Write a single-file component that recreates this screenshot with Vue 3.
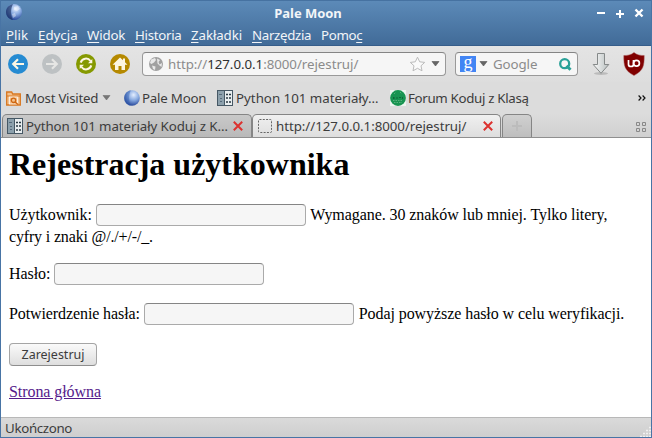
<script setup>
const menus = [
  { key: 'P', rest: 'lik', cls: 'm1' },
  { key: 'E', rest: 'dycja', cls: 'm2' },
  { key: 'W', rest: 'idok', cls: 'm3' },
  { key: 'H', rest: 'istoria', cls: 'm4' },
  { key: 'Z', rest: 'akładki', cls: 'm5' },
  { key: 'N', rest: 'arzędzia', cls: 'm6' },
  { pre: 'Pomo', key: 'c', rest: '', cls: 'm7' }
]
</script>

<template>
  <div class="window">
    <header class="chrome">
      <div class="titlebar">
        <svg class="app" width="16" height="16" viewBox="0 0 16 16">
          <defs>
            <radialGradient id="moon" cx=".6" cy=".3" r=".7">
              <stop offset="0" stop-color="#e4eeff" /><stop offset=".5" stop-color="#86a8df" /><stop offset="1" stop-color="#27489a" />
            </radialGradient>
          </defs>
          <circle cx="8" cy="8" r="8" fill="url(#moon)" />
          <path d="M7 .3C3 1 0 4 0 8s3 7.500 7 8C4.500 12 4.500 4 7 .3z" fill="#1d3262" opacity=".65" />
          <path d="M8 3l4-1 2 3-3 2-3-1zM6 10l3-1 1 3-3 2z" fill="#fff" opacity=".4" />
        </svg>
        <span class="title">Pale Moon</span>
        <svg class="controls" width="48" height="12" viewBox="0 0 48 12" fill="none" stroke="#fff" stroke-width="2">
          <path d="M1 6h8M20 7h8M24 3v8" /><path d="M39.500 2.500l7 7M46.500 2.500l-7 7" stroke-width="2.400" />
        </svg>
      </div>
      <nav class="menubar">
        <span v-for="m in menus" :key="m.cls" class="menu" :class="m.cls">{{ m.pre }}<span class="key">{{ m.key }}</span>{{ m.rest }}</span>
      </nav>
    </header>

    <div class="toolbar">
      <svg class="nav" width="20" height="20" viewBox="0 0 20 20">
        <circle cx="10" cy="10" r="10" fill="#268bd2" />
        <path d="M16 10H5.500M10 5.200L5.200 10l4.800 4.800" fill="none" stroke="#fdf6e3" stroke-width="2.200" />
      </svg>
      <svg class="nav" width="20" height="20" viewBox="0 0 20 20">
        <circle cx="10" cy="10" r="10" fill="#bdc1c3" />
        <path d="M4 10h10.500M10 5.200l4.800 4.800-4.800 4.800" fill="none" stroke="#e6e6e4" stroke-width="2.200" />
      </svg>
      <svg class="nav" width="20" height="20" viewBox="0 0 20 20">
        <circle cx="10" cy="10" r="10" fill="#859900" />
        <path d="M4.700 8.600a5.500 5.500 0 0 1 9.800-1.600M15.300 11.400a5.500 5.500 0 0 1-9.800 1.600" fill="none" stroke="#fdf6e3" stroke-width="2" />
        <path d="M16.300 5v4.300H12zM3.700 15v-4.300H8z" fill="#fdf6e3" />
      </svg>
      <svg class="nav" width="20" height="20" viewBox="0 0 20 20">
        <circle cx="10" cy="10" r="10" fill="#b58900" />
        <path d="M10 3.500l3 2.800V4.500h2v3.700l2.500 2.600H15V16h-3.500v-4h-3v4H5v-5.200H2.500z" fill="#fdf6e3" />
      </svg>
      <div class="urlbar">
        <svg class="globe" width="14" height="14" viewBox="0 0 14 14">
          <circle cx="7" cy="7" r="7" fill="#a0a0a0" />
          <path d="M2 2.500L6 1l1 2-2 2.500L2.500 7 1 6zM8 1.500l3 1.500-1.500 2 1 2.500L13 6l-.5 4-2-1.500-2-2zM3 8.500l3.500 1-.5 3.500L4 12z" fill="#e8e8e8" />
        </svg>
        <span class="url"><span class="scheme">http://</span><span class="host">127.0.0.1</span><span class="path">:8000/rejestruj/</span></span>
        <svg class="star" width="17" height="16" viewBox="0 0 17 16"><path d="M8.500 1.200l2.200 4.600 5 .6-3.700 3.400 1 5-4.500-2.500L4 14.800l1-5L1.300 6.400l5-.6z" fill="#fafafa" stroke="#bbb" /></svg>
        <svg class="drop" width="9" height="6" viewBox="0 0 9 6"><path d="M1 .500h7l-3.500 4.500z" fill="#666" stroke="#555" stroke-width=".6" /></svg>
      </div>
      <div class="search">
        <span class="g"><span>g</span></span>
        <svg width="9" height="6" viewBox="0 0 9 6"><path d="M1 .500h7l-3.500 4.500z" fill="#666" stroke="#555" stroke-width=".6" /></svg>
        <span class="engine">Google</span>
        <svg class="lens" width="13" height="13" viewBox="0 0 13 13" fill="none" stroke="#2aa198"><circle cx="5.700" cy="5.700" r="4.500" stroke-width="2.300" /><path d="M7.500 7.800l4 4" stroke-width="3" /></svg>
      </div>
      <svg class="download" width="20" height="24" viewBox="0 0 20 24">
        <defs><linearGradient id="dl" x1="0" x2="1"><stop offset="0" stop-color="#fafafa" /><stop offset="1" stop-color="#b9c0c0" /></linearGradient></defs>
        <ellipse cx="10" cy="21.500" rx="7" ry="1.500" fill="#bbb" />
        <path d="M6.500 1.500h7v11h4.300L10 21.300 2.200 12.500h4.300z" fill="url(#dl)" stroke="#858989" />
      </svg>
      <svg class="shield" width="22" height="24" viewBox="0 0 22 24">
        <path d="M11 .5C8 3 4.500 3.500.8 3.500c0 10 .5 15 10.200 20 9.700-5 10.200-10 10.200-20C17.500 3.500 14 3 11 .5z" fill="#800000" stroke="#a75555" stroke-width=".5" />
        <path d="M5.500 8v4.500c0 1.300.9 2 2.500 2s2.500-.7 2.500-2V8" fill="none" stroke="#fff" stroke-width="1.700" />
        <circle cx="13.500" cy="11.300" r="2.900" fill="none" stroke="#fff" stroke-width="1.700" />
      </svg>
    </div>

    <div class="bookmarks">
      <svg class="folder" width="15" height="15" viewBox="0 0 15 15" fill="none">
        <path d="M.7 1h5l1 2h7.600v11H.7z" fill="#f3c18d" stroke="#d9771f" stroke-width="1.300" />
        <path d="M1 5h13" stroke="#d9771f" /><rect x="3.500" y="6" width="8" height="7" stroke="#fff" stroke-width=".7" />
        <circle cx="7.500" cy="9.300" r="2.200" stroke="#cf6610" stroke-width="1.300" /><path d="M9 11l3 2.500" stroke="#cf6610" stroke-width="1.500" />
      </svg>
      <span class="b1">Most Visited</span>
      <svg class="bdrop" width="9" height="6" viewBox="0 0 9 6"><path d="M1 .500h7l-3.500 4.500z" fill="#777" stroke="#666" stroke-width=".5" /></svg>
      <svg class="moon" width="16" height="16" viewBox="0 0 16 16"><circle cx="8" cy="8" r="7.800" fill="url(#moon)" /><path d="M7 .3C3 1 0 4 0 8s3 7.500 7 8C4.500 12 4.500 4 7 .3z" fill="#2e59ac" opacity=".4" /></svg>
      <span class="b2">Pale Moon</span>
      <svg class="book" width="16" height="16" viewBox="0 0 16 16">
        <rect x=".5" y=".5" width="15" height="15" fill="#e9eef0" stroke="#465865" /><path d="M1 1h6v14H1z" fill="#8ca0ac" />
        <path d="M7.500 1v14" stroke="#465865" /><path d="M2 4.500h3M3 8.500h2M3 11.500h2" stroke="#55697a" /><path d="M9 4.500h2M12 4.500h2M9 8h2M12 8h2M9 12h2M12 12h2" stroke="#283942" stroke-width="1.300" />
      </svg>
      <span class="b3">Python 101 materiały…</span>
      <svg class="forum" width="16" height="16" viewBox="0 0 16 16">
        <rect width="16" height="16" fill="#edf5ef" /><circle cx="8" cy="8" r="7.900" fill="#189451" />
        <path d="M4 4l2-2M10 2l2 2M3 10.500h10M4 12.500h8" stroke="#58b07d" stroke-dasharray="1.500 1" /><path d="M3 8h1.500M6.500 8h1M9.500 7.500h1M12 8h1" stroke="#073e22" />
      </svg>
      <span class="b4">Forum Koduj z Klasą</span>
      <svg class="more" width="8" height="6" viewBox="0 0 8 6" fill="none" stroke="#111" stroke-width="1.200"><path d="M.6.500L3 3 .6 5.500M4.600.500L7 3 4.600 5.500" /></svg>
    </div>

    <div class="tabs">
      <div class="tab first">
        <svg class="tabicon" width="16" height="16" viewBox="0 0 16 16">
          <rect x=".5" y=".5" width="15" height="15" fill="#e9eef0" stroke="#465865" /><path d="M1 1h6v14H1z" fill="#8ca0ac" />
          <path d="M7.500 1v14" stroke="#465865" /><path d="M2 4.500h3M3 8.500h2M3 11.500h2" stroke="#55697a" /><path d="M9 4.500h2M12 4.500h2M9 8h2M12 8h2M9 12h2M12 12h2" stroke="#283942" stroke-width="1.300" />
        </svg>
        <span class="t1">Python 101 materiały Koduj z K…</span>
        <svg class="close" width="10" height="10" viewBox="0 0 10 10"><path d="M.8.800l8.400 8.400M9.200.800L.8 9.200" stroke="#dc322f" stroke-width="2" /></svg>
      </div>
      <div class="tab active">
        <svg class="tabicon" width="16" height="16" viewBox="0 0 16 16"><rect x="1.500" y="1.500" width="13" height="13" rx="1" fill="none" stroke="#666" stroke-dasharray="2 1.300" /></svg>
        <span class="t2">http://127.0.0.1:8000/rejestruj/</span>
        <svg class="close" width="10" height="10" viewBox="0 0 10 10"><path d="M.8.800l8.400 8.400M9.200.800L.8 9.200" stroke="#dc322f" stroke-width="2" /></svg>
      </div>
      <div class="tab new"><svg width="10" height="10" viewBox="0 0 10 10"><path d="M0 5h10M5 0v10" stroke="#bcbcbc" stroke-width="2" /></svg></div>
      <svg class="groups" width="10" height="10" viewBox="0 0 10 10" fill="none" stroke="#888"><path d="M.5.500h3v3h-3zM6.500.500h3v3h-3zM.5 6.500h3v3h-3zM6.500 6.500h3v3h-3z" /></svg>
    </div>

    <main class="page">
      <h1>Rejestracja użytkownika</h1>
      <form @submit.prevent>
        <p>Użytkownik: <input type="text"> Wymagane. 30 znaków lub mniej. Tylko litery, <span class="chars">cyfry i znaki @/./+/-/_.</span></p>
        <p>Hasło: <input type="password"></p>
        <p><span class="confirm">Potwierdzenie hasła:</span> <input type="password"> Podaj powyższe hasło w celu weryfikacji.</p>
        <button><span>Zarejestruj</span></button>
      </form>
      <a href="#">Strona główna</a>
    </main>

    <footer class="status">
      <span class="done">Ukończono</span>
      <svg class="grip" width="11" height="11" viewBox="0 0 11 11"><path d="M9 1.500h2M6 4.500h5M3 7.500h8M0 10.500h11" stroke="#f1f1f1" stroke-width="1.500" stroke-dasharray="2 1" /></svg>
    </footer>
  </div>
</template>

<style>
body { margin: 0; overflow: hidden; }
</style>

<style scoped>
* { box-sizing: border-box; }
.window { width: 652px; height: 438px; border: solid #4874a5; border-width: 0 1px; display: flex; flex-direction: column; font: 13.3px/18px "Noto Sans", sans-serif; color: #3c3c3c; background: #dcdcdc; white-space: nowrap; }
svg { display: block; flex: none; }
.chrome { height: 46px; flex: none; background: linear-gradient(#5c8ab8, #416b98); border-top: 1px solid #4672a1; border-bottom: 1px solid #365d8a; color: #f2f5f8; }
.titlebar { height: 24px; display: grid; grid-template-columns: 60px 1fr 60px; align-items: center; }
.app { margin-left: 5px; margin-bottom: 2px; }
.title { padding-left: 0; margin-top: -1px; text-align: center; font-weight: 700; font-size: 13px; }
.title { position: relative; left: -18px; letter-spacing: -.05px; }
.controls { margin-left: 5px; }
.menubar { display: flex; height: 20px; padding-left: 5px; line-height: 20px; }
.menu { flex: none; }
.key { text-decoration: underline; text-underline-offset: 2px; text-decoration-thickness: 1px; text-decoration-skip-ink: none; }
.m1 { width: 32px; }
.m2 { width: 49px; }
.m3 { width: 48px; letter-spacing: -.2px; }
.m4 { width: 56px; letter-spacing: -.3px; }
.m5 { width: 61px; letter-spacing: -.1px; }
.m6 { width: 69px; letter-spacing: -.33px; }
.m7 { letter-spacing: -.35px; }
.toolbar { height: 36px; flex: none; display: flex; align-items: center; padding-left: 7px; background: linear-gradient(#e4e4e4, #dddddd); }
.nav { margin-right: 14px; }
.urlbar { width: 304px; height: 24px; margin-left: -2px; border: 1px solid #999; border-top-color: #858585; border-radius: 4px; background: #f6f6f6; display: flex; align-items: center; color: #8b8b8b; }
.globe { margin: 0 5px 0 6px; }
.url { width: 241px; letter-spacing: -.04px; }
.host { color: #303030; }
.drop { margin-left: 5px; }
.search { width: 123px; height: 24px; margin-left: 9px; padding-left: 4px; border: 1px solid #999; border-top-color: #858585; border-radius: 4px; background: #f6f6f6; display: flex; align-items: center; }
.g { width: 16px; height: 16px; margin-right: 3px; background: #4285f4; color: #fff; font: 18px/12px "Liberation Serif", serif; text-align: center; }
.engine { width: 71px; padding-left: 5px; color: #8b8b8b; letter-spacing: -.1px; }
.download { margin-left: 13px; }
.shield { margin-left: 12px; }
.bookmarks { height: 32px; flex: none; display: flex; align-items: center; padding-left: 5px; background: #dcdcdc; }
.folder { margin-right: 4px; }
.b1 { width: 77px; letter-spacing: -.27px; }
.bdrop { margin-right: 13px; }
.moon { margin-right: 2px; }
.b2 { width: 75px; letter-spacing: -.22px; }
.book { margin-right: 3px; }
.b3 { width: 154px; }
.forum { margin-right: 2px; }
.b4 { width: 230px; letter-spacing: -.32px; }
.tabs { height: 24px; flex: none; display: flex; background: linear-gradient(#dcdcdc, #d0d0d0); border-bottom: 1px solid #8f8f8f; }
.tab { display: flex; align-items: center; height: 23px; border: 1px solid #858585; border-bottom: 0; border-radius: 5px 5px 0 0; background: linear-gradient(#c9c9c9, #b9b9b9); flex: none; }
.first { width: 250px; margin-left: 1px; padding-left: 4px; }
.active { width: 249px; padding-left: 4px; background: linear-gradient(#f0f0f0, #dedede); }
.new { width: 30px; margin-left: 1px; justify-content: center; background: linear-gradient(#d0d0d0, #bebebe); }
.tabicon { margin-right: 3px; }
.t1 { width: 207px; letter-spacing: -.07px; }
.t2 { width: 207px; letter-spacing: -.04px; }
.groups { margin: 8px 0 0 104px; }
.page { height: 279px; flex: none; padding: 8px; background: #fff; color: #000; font: 16px/22px "Liberation Serif", serif; white-space: normal; }
h1 { margin: 0 0 21px; font-size: 32px; line-height: 37px; }
p { margin: 0 0 18px; letter-spacing: -.07px; }
p:nth-child(1) { margin-bottom: 15px; }
.chars { letter-spacing: -.16px; }
.confirm { letter-spacing: -.1px; }
input { width: 210px; height: 22px; margin: 0 1px 0 0; padding: 0; border: 1px solid #aaa; border-top-color: #858585; border-radius: 4px; background: #f6f6f6; vertical-align: top; outline: 0; }
button { display: block; width: 88px; height: 23px; margin: 0 0 15px; padding: 0; border: 1px solid #a5a5a5; border-bottom-color: #8e8e8e; border-radius: 4px; background: linear-gradient(#fafafa, #dedede); color: #3c3c3c; font: 12.500px/20px "Noto Sans", sans-serif; }
a { color: #551a8b; letter-spacing: -.07px; }
.status { height: 21px; flex: none; display: flex; justify-content: space-between; align-items: center; padding-left: 4px; border-top: 1px solid #b8b8b8; border-bottom: 1px solid #4874a5; background: linear-gradient(#dadada, #cecece); }
.done { letter-spacing: -.33px; }
.grip { align-self: flex-end; }
</style>
